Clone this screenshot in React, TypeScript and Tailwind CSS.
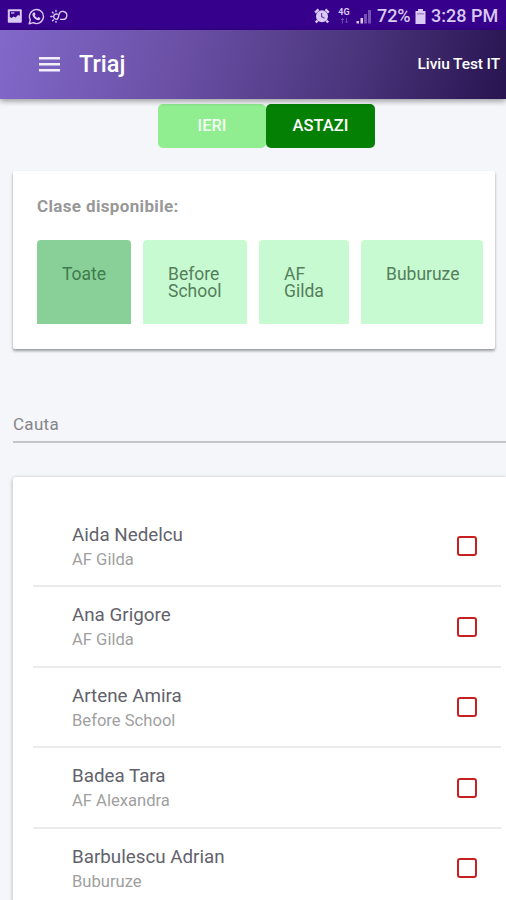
const classes = [
  { name: "Toate", width: "w-[94px]", active: true },
  { name: "Before School", width: "w-[104px]", active: false },
  { name: "AF Gilda", width: "w-[90px]", active: false },
  { name: "Buburuze", width: "w-[122px]", active: false },
];

const children = [
  { name: "Aida Nedelcu", group: "AF Gilda" },
  { name: "Ana Grigore", group: "AF Gilda" },
  { name: "Artene Amira", group: "Before School" },
  { name: "Badea Tara", group: "AF Alexandra" },
  { name: "Barbulescu Adrian", group: "Buburuze" },
];

function StatusBar() {
  return (
    <div className="flex h-[30px] shrink-0 items-center justify-between bg-[#36008c] pt-[2px] pr-[8px] pl-[7px] text-[#d9c9f3]">
      <div className="flex items-center gap-[5px]">
        <svg width="16" height="16" viewBox="0 0 16 16">
          <rect x="0.8" y="1.2" width="14" height="13.6" rx="1" fill="currentColor" />
          <path d="M2.8 3.2h10v4.6l-1.8-.8-2.4 2.4-2-1-2 1.6-1.8-1z" fill="#36008c" />
          <path d="M4 4.4h3.4v1.2H4z" fill="currentColor" />
        </svg>
        <svg width="17" height="17" viewBox="0 0 17 17" fill="none">
          <path
            d="M1.2 15.8l1.1-3.9a7 7 0 1 1 2.8 2.8z"
            stroke="currentColor"
            strokeWidth="1.4"
            strokeLinejoin="round"
          />
          <path
            d="M5.6 4.5l1.2.1.8 1.9-.8 1c.6 1.2 1.4 1.9 2.6 2.5l1-.9 1.9.9c.1 1.5-.9 2.2-2 2.2-2.9-.3-5.7-3.1-5.9-5.7 0-.9.5-1.7 1.2-2z"
            fill="currentColor"
          />
        </svg>
        <svg
          width="18"
          height="15"
          viewBox="0 0 18 15"
          fill="none"
          stroke="currentColor"
          strokeWidth="1.4"
          strokeLinecap="round"
        >
          <path d="M0.8 7.5h1.4M2.4 3.2l.8.8M6 1.5v1M2.6 11.8l.8-.8M6 13.3v-.8" />
          <path d="M7.4 5.2a2.6 2.6 0 1 0 .2 4.600" />
          <path d="M7.600 9.800c1.200-1 1-3 1.400-4.600a4 4 0 1 1 3.800 5.200h-2.200" />
        </svg>
      </div>

      <div className="flex items-center text-[18px] leading-none font-medium">
        <svg width="16" height="16" viewBox="0 0 16 16" className="mr-[7px]">
          <circle cx="8" cy="8.2" r="6" fill="currentColor" />
          <path
            d="M1.2 4.6L4.5 1.4M14.8 4.6l-3.3-3.2M3.6 12.4l-1.8 2.2M12.4 12.4l1.8 2.2"
            stroke="currentColor"
            strokeWidth="2.4"
          />
          <path d="M7.6 5v3.6l2.8 1.6" stroke="#6d42b0" strokeWidth="1.2" fill="none" />
        </svg>
        <div className="mr-[5px] flex h-[17px] w-[14px] flex-col items-center">
          <span className="text-[9px] leading-[9px] font-bold">4G</span>
          <svg width="9" height="7" viewBox="0 0 9 7" fill="none" stroke="#6c45ae">
            <path d="M2.5 6.5v-5M1 3l1.5-1.5L4 3M6.5 1v5M5 4.5L6.5 6 8 4.5" />
          </svg>
        </div>
        <svg width="16" height="15" viewBox="0 0 16 15" className="mr-[5px]">
          <path d="M0.5 12h2.5v2.5h-2.5zM4.5 9h2.5v5.5h-2.5z" fill="currentColor" />
          <path d="M8 5h3v9.5h-3zM12 1h3v13.5h-3z" fill="#7652b5" />
        </svg>
        <span className="w-[35px] tracking-[-0.1px]">72%</span>
        <svg width="11" height="15" viewBox="0 0 11 15" className="mr-[5px] ml-[3px]">
          <path d="M3 0h5v2h2.5v13h-10v-13h2.5z" fill="currentColor" />
          <path d="M2 4h7v1.5h-7z" fill="#a48bd0" />
        </svg>
        <span className="w-[67px] whitespace-nowrap">3:28 PM</span>
      </div>
    </div>
  );
}

function Header() {
  return (
    <header className="z-10 flex h-[69px] shrink-0 items-center bg-[linear-gradient(105deg,#8269ca_0%,#6b50a6_35%,#4c367e_68%,#281450_100%)] pr-[6px] pl-[39px] text-white shadow-[0_2px_6px_rgba(0,0,0,0.4)]">
      <button aria-label="Meniu">
        <svg width="21" height="15" viewBox="0 0 21 15" fill="#f3effa">
          <path d="M0 0h21v2.5H0zM0 6h21v2.500H0zM0 12h21v2.500H0z" />
        </svg>
      </button>
      <h1 className="ml-[19px] text-[23.5px] leading-none font-medium">Triaj</h1>
      <span className="mr-0 ml-auto text-[15.5px] leading-none font-medium tracking-[-0.1px]">
        Liviu Test IT
      </span>
    </header>
  );
}

function ClassPicker() {
  return (
    <section className="mt-[23px] mr-[11px] ml-[13px] h-[178px] shrink-0 rounded-[2px] bg-white pt-[25px] pl-[24px] shadow-[0_2px_3px_rgba(0,0,0,0.38)]">
      <h2 className="text-[17px] leading-[20px] font-bold tracking-[0.35px] text-[#989898]">
        Clase disponibile:
      </h2>
      <div className="mt-[24px] flex gap-[12px]">
        {classes.map((item) => (
          <button
            key={item.name}
            className={`flex h-[84px] shrink-0 items-start rounded-t-[4px] pt-[25.5px] pr-[20px] pl-[25px] text-left text-[17.5px] leading-[17.5px] ${item.width} ${
              item.active ? "bg-[#88d097] text-[#3f7b4c]" : "bg-[#c7fad0] text-[#557e5c]"
            }`}
          >
            {item.name}
          </button>
        ))}
      </div>
    </section>
  );
}

function ChildList() {
  return (
    <section className="mt-[34px] ml-[13px] flex-1 rounded-tl-[3px] bg-white pt-[29.5px] pr-[5px] pl-[20px] shadow-[0_1px_4px_rgba(0,0,0,0.3)]">
      {children.map((child) => (
        <div
          key={child.name}
          className="flex h-[80.5px] items-center justify-between border-b-2 border-[#ebebed] pt-[2px] pr-[24px] pl-[39px]"
        >
          <div className="pt-px">
            <div className="text-[18.8px] leading-[25px] text-[#62626c]">{child.name}</div>
            <div className="text-[16.6px] leading-[24px] text-[#a0a0a0]">{child.group}</div>
          </div>
          <button
            role="checkbox"
            aria-checked={false}
            aria-label={child.name}
            className="-mt-px size-[20px] rounded-[3px] border-2 border-[#c62020]"
          />
        </div>
      ))}
    </section>
  );
}

function App() {
  return (
    <div className="flex h-[900px] w-[506px] flex-col overflow-hidden bg-[#f5f6fa] font-['Roboto',sans-serif]">
      <StatusBar />
      <Header />

      <div className="mt-[5px] flex shrink-0 justify-center pl-[27px] text-[16.5px] font-medium text-white">
        <button className="h-[44px] w-[108px] rounded-[5px] bg-[#90ee90] text-[#f2fff2]">IERI</button>
        <button className="h-[44px] w-[109px] rounded-[5px] bg-[#048004]">ASTAZI</button>
      </div>

      <ClassPicker />

      <input
        placeholder="Cauta"
        className="mt-[62px] ml-[13px] h-[32px] w-[493px] shrink-0 border-b-2 border-[#c5c5c9] pb-[5px] text-[17px] tracking-[0.3px] placeholder:text-[#858589]"
      />

      <ChildList />
    </div>
  );
}

export default App;
